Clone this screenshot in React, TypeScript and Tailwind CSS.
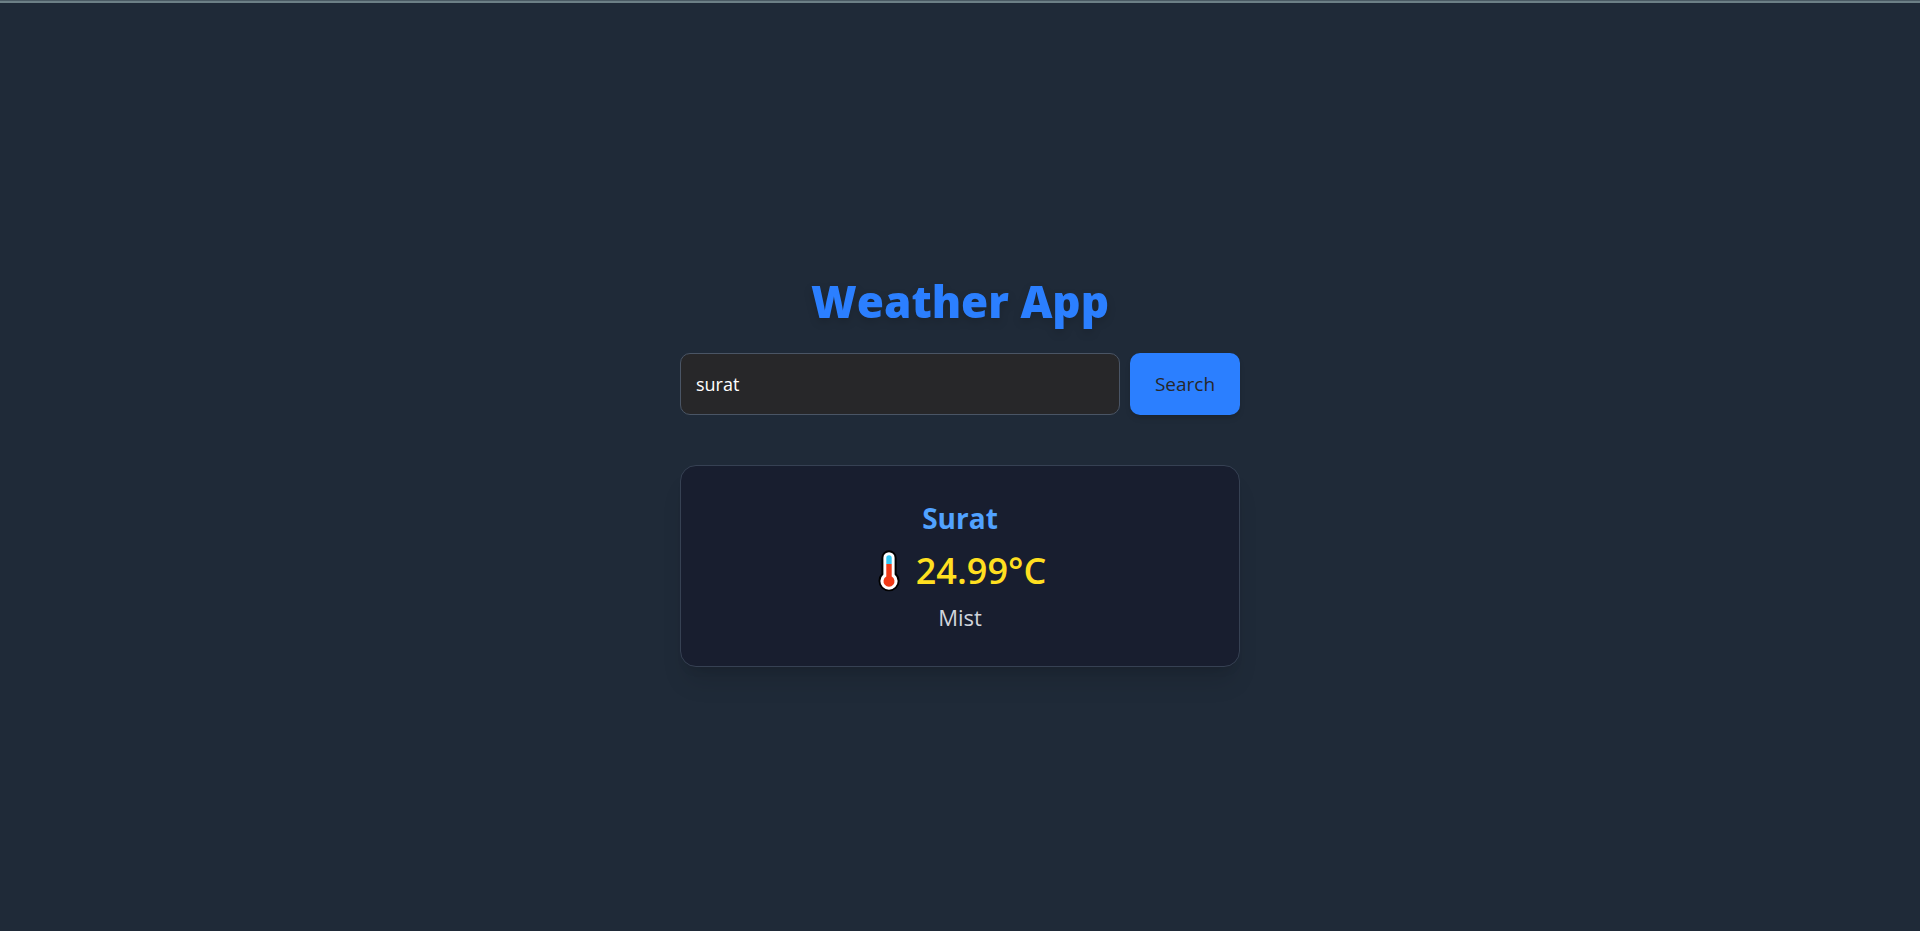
import { useState } from "react";

function Thermometer() {
  return (
    <svg viewBox="0 0 22 42" className="h-[42px] w-[22px]" role="img" aria-label="Temperature">
      <path d="M11 0.3a7.6 7.6 0 0 0-7.6 7.6V23.5A10.5 10.5 0 1 0 18.6 23.5V7.9A7.6 7.6 0 0 0 11 .3Z" fill="#000" />
      <path d="M11 2.2a5.6 5.6 0 0 0-5.6 5.6V24.6A8.6 8.6 0 1 0 16.6 24.6V7.8A5.6 5.6 0 0 0 11 2.2Z" fill="#fff" />
      <path d="M8.3 14V7.9a2.7 2.7 0 0 1 5.4 0V14Z" fill="#32c8f4" />
      <path d="M8.3 14h5.4v12.5a5.5 5.5 0 1 1-5.4 0Z" fill="#f03a17" />
    </svg>
  );
}

export default function App() {
  const [city, setCity] = useState("surat");

  return (
    <div className="flex min-h-screen flex-col border-t border-[#4a5a64] bg-[#1f2a38] font-['Open_Sans','Noto_Sans',sans-serif]">
      <main className="flex flex-1 flex-col items-center justify-center border-t-2 border-[#6c7f86] px-5 pt-1">
        <div className="flex w-full max-w-[560px] flex-col">
          <h1 className="mb-[22px] text-center text-[44px] leading-[60px] font-extrabold text-[#2b7fff] drop-shadow-lg">
            Weather App
          </h1>
          <form className="flex gap-[10px]" onSubmit={(e) => e.preventDefault()}>
            <input
              type="text"
              aria-label="City"
              value={city}
              onChange={(e) => setCity(e.target.value)}
              className="h-[62px] min-w-0 flex-1 rounded-[10px] border border-[#4a5565] bg-[#272729] px-[15px] text-lg text-white outline-none"
            />
            <button
              type="submit"
              className="h-[62px] w-[110px] rounded-[10px] bg-[#2b7fff] text-[19px] font-medium text-[#272729] shadow-md"
            >
              Search
            </button>
          </form>
          <section className="mt-[50px] flex flex-col items-center rounded-2xl border border-[#364153] bg-[#181e2f] p-8 shadow-xl">
            <h2 className="text-[28px] leading-10 font-bold text-[#51a2ff]">Surat</h2>
            <p className="mt-2 flex items-center gap-4 pl-1 text-4xl leading-[50px] font-semibold text-[#ffdf20]">
              <Thermometer />
              <span>24.99°C</span>
            </p>
            <p className="mt-1 text-[22px] leading-[34px] text-[#d1d5dc]">Mist</p>
          </section>
        </div>
      </main>
    </div>
  );
}
